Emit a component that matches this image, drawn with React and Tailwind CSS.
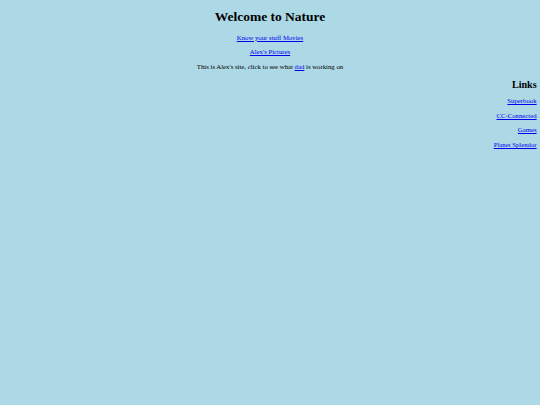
import React from "react";

const linkCls = "text-[#0000ee] underline";

export default function App() {
  return (
    <div className="min-h-screen bg-[#add8e6] px-[3.4px] pt-[9px] font-['Liberation_Serif',serif] text-black">
      <h1 className="text-center text-[13.5px] font-bold leading-[15.5px]">
        Welcome to Nature
      </h1>
      <div className="mt-[9px] flex flex-col items-center gap-[6.75px] text-[6.75px] leading-[7.8px]">
        <p>
          <a href="#" className={linkCls}>Know your stuff Movies</a>
        </p>
        <p>
          <a href="#" className={linkCls}>Alex's Pictures</a>
        </p>
        <p>
          This is Alex's site, click to see what{" "}
          <a href="#" className={linkCls}>dad</a> is working on
        </p>
      </div>
      <h2 className="mt-[8.4px] text-right text-[10.1px] font-bold leading-[11.6px]">
        Links
      </h2>
      <div className="mt-[7px] flex flex-col items-end gap-[6.75px] text-[6.75px] leading-[7.8px]">
        <p><a href="#" className={linkCls}>Superbook</a></p>
        <p><a href="#" className={linkCls}>CC-Connected</a></p>
        <p><a href="#" className={linkCls}>Games</a></p>
        <p><a href="#" className={linkCls}>Planet Splendor</a></p>
      </div>
    </div>
  );
}
